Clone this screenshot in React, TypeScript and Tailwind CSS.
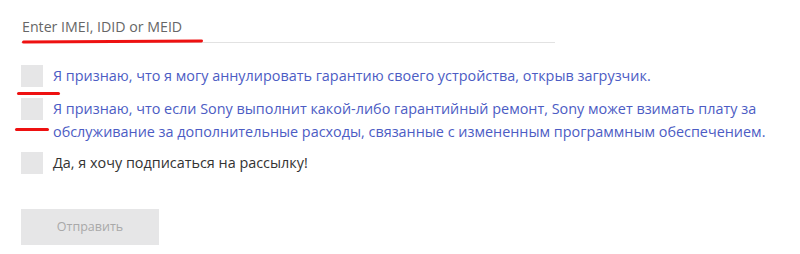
import React from 'react';

const items = [
  {
    id: 'unlock',
    text: 'Я признаю, что я могу аннулировать гарантию своего устройства, открыв загрузчик.',
    blue: true,
  },
  {
    id: 'repair',
    text: 'Я признаю, что если Sony выполнит какой-либо гарантийный ремонт, Sony может взимать плату за обслуживание за дополнительные расходы, связанные с измененным программным обеспечением.',
    blue: true,
  },
  {
    id: 'news',
    text: 'Да, я хочу подписаться на рассылку!',
    blue: false,
  },
];

export default function App() {
  return (
    <div
      className="relative w-[800px] h-[254px] bg-white overflow-hidden"
      style={{ fontFamily: '"Open Sans", "Noto Sans", sans-serif' }}
    >
      <div className="pl-[21px] pt-[14px]">
        {/* IMEI input */}
        <div className="w-[534px] border-b border-[#e2e2e2] h-[29px]">
          <input
            className="w-full outline-none bg-transparent text-[14.2px] text-[#555] placeholder:text-[#666] pl-[1px]"
            placeholder="Enter IMEI, IDID or MEID"
          />
        </div>

        {/* checkboxes */}
        <div className="mt-[22px] flex flex-col">
          {items.map((item, i) => (
            <label
              key={item.id}
              className={`flex items-start gap-[10px] ${i === 0 ? 'mb-[11px]' : i === 1 ? 'mb-[9px]' : ''}`}
            >
              <span className="w-[22px] h-[22px] bg-[#e6e6e7] shrink-0" />
              <span
                className={`text-[14.4px] leading-[23px] -mt-[1px] ${
                  item.blue ? 'text-[#4c5cc4] w-[735px]' : 'text-[#333]'
                }`}
              >
                {item.text}
              </span>
            </label>
          ))}
        </div>

        <button className="mt-[35px] w-[138px] h-[36px] bg-[#e6e6e7] text-[12.5px] text-[#a9a9a9]">
          Отправить
        </button>
      </div>

      {/* red marker annotations */}
      <div className="absolute left-[22px] top-[40px] w-[181px] h-[3px] bg-[#ee1111] rounded-full -rotate-[0.4deg]" />
      <div className="absolute left-[17px] top-[92px] w-[43px] h-[3px] bg-[#ee1111] rounded-full" />
      <div className="absolute left-[15px] top-[128px] w-[34px] h-[3px] bg-[#ee1111] rounded-full" />
    </div>
  );
}
